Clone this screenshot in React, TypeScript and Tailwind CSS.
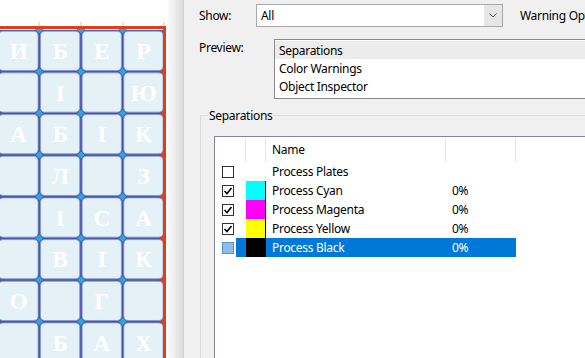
import React from 'react';

const STEP = 41.67;
const COL_X = [-2.4, 39.27, 80.94, 122.61, 164.28];
const ROW_Y = Array.from({ length: 9 }, (_, i) => 30 + i * STEP);

const LETTERS = [
    ['И', 'Б', 'Е', 'Р'],
    ['', 'І', '', 'Ю'],
    ['А', 'Б', 'І', 'К'],
    ['', 'Л', '', 'З'],
    ['', 'І', 'С', 'А'],
    ['', 'В', 'І', 'К'],
    ['О', '', 'Г', ''],
    ['', 'Б', 'А', 'Х'],
];

const Diamond = ({ x, y, fill, stroke }: { x: number; y: number; fill: string; stroke: string }) => (
    <polygon
        points={`${x},${y - 4} ${x + 4},${y} ${x},${y + 4} ${x - 4},${y}`}
        fill={fill}
        stroke={stroke}
        strokeWidth={0.8}
    />
);

const Canvas = () => (
    <svg width={166} height={358} className="block">
        <rect x={0} y={30} width={166} height={328} fill="#4656a8" />
        {LETTERS.map((row, r) =>
            row.map((ch, c) => (
                <g key={`${r}-${c}`}>
                    <rect
                        x={COL_X[c] + 1.2}
                        y={ROW_Y[r] + 1.2}
                        width={STEP - 2.4}
                        height={STEP - 2.4}
                        rx={4}
                        fill="#e4f1f7"
                        stroke="#8a94cc"
                        strokeWidth={0.8}
                    />
                    {ch && (
                        <text
                            x={COL_X[c] + STEP / 2}
                            y={ROW_Y[r] + STEP / 2 + 8}
                            textAnchor="middle"
                            fill="#ffffff"
                            fontFamily="'Liberation Serif', serif"
                            fontWeight={700}
                            fontSize={23}
                        >
                            {ch}
                        </text>
                    )}
                </g>
            ))
        )}
        {ROW_Y.map((y) =>
            COL_X.slice(1, 4).map((x) => (
                <Diamond key={`${x}-${y}`} x={x} y={y} fill="#2ea5e2" stroke="#3b62b0" />
            ))
        )}
        <rect x={0} y={26} width={166} height={3} fill="#e53c18" />
        <rect x={163} y={26} width={3} height={332} fill="#e53c18" />
        {ROW_Y.slice(1).map((y) => (
            <Diamond key={`r-${y}`} x={164.5} y={y} fill="#e53c18" stroke="#e53c18" />
        ))}
        {[39, 81, 123, 164].map((x) => (
            <line key={x} x1={x} y1={22} x2={x} y2={26} stroke="#c8c8c8" strokeWidth={1} />
        ))}
    </svg>
);

const Check = ({ checked, selected }: { checked?: boolean; selected?: boolean }) => (
    <div
        className={
            selected
                ? 'w-[12px] h-[12px] border border-[#5b8fca] bg-[#8dbcea]'
                : 'w-[12px] h-[12px] border border-[#333333] bg-white flex items-center justify-center'
        }
    >
        {checked && (
            <svg width={10} height={10} viewBox="0 0 10 10">
                <path d="M1.5 5 L4 7.5 L8.5 2" fill="none" stroke="#000" strokeWidth={1.6} />
            </svg>
        )}
    </div>
);

const rows = [
    { name: 'Process Plates', swatch: '', pct: '', checked: false },
    { name: 'Process Cyan', swatch: 'bg-[#00ffff]', pct: '0%', checked: true },
    { name: 'Process Magenta', swatch: 'bg-[#ff00ff]', pct: '0%', checked: true },
    { name: 'Process Yellow', swatch: 'bg-[#ffff00]', pct: '0%', checked: true },
    { name: 'Process Black', swatch: 'bg-black', pct: '0%', checked: false, selected: true },
];

export default function App() {
    return (
        <div
            className="w-[585px] h-[358px] flex overflow-hidden text-[12px] tracking-[-0.3px] text-black"
            style={{ fontFamily: "'Noto Sans', sans-serif" }}
        >
            <div className="w-[166px] shrink-0 bg-white">
                <Canvas />
            </div>
            <div className="w-[18px] shrink-0 bg-gradient-to-r from-white to-[#dcdcdc] border-r border-[#d2d2d2]" />
            <div className="flex-1 bg-[#f0f0f0] pl-[15px] flex flex-col min-w-0">
                <div className="mt-[4px] h-[23px] flex items-center whitespace-nowrap">
                    <div className="w-[57px] shrink-0 pt-px">Show:</div>
                    <div className="w-[247px] h-[23px] shrink-0 border border-[#a8a8a8] bg-white flex">
                        <div className="flex-1 pl-[4px] flex items-center">All</div>
                        <div className="w-[18px] bg-[#e6e6e6] flex items-center justify-center">
                            <svg width={8} height={5} viewBox="0 0 8 5">
                                <path d="M0.5 0.5 L4 4 L7.5 0.5" fill="none" stroke="#555" strokeWidth={1} />
                            </svg>
                        </div>
                    </div>
                    <div className="ml-[17px] pt-px">Warning Options</div>
                </div>

                <div className="mt-[12px] flex">
                    <div className="w-[75px] shrink-0">Preview:</div>
                    <div className="w-[400px] h-[60px] shrink-0 border border-[#8a8a8a] bg-white pt-px">
                        <div className="h-[18px] pl-[4px] pt-[2px] flex items-center bg-[#ececec]">Separations</div>
                        <div className="h-[18px] pl-[4px] pt-[2px] flex items-center">Color Warnings</div>
                        <div className="h-[18px] pl-[4px] pt-[2px] flex items-center">Object Inspector</div>
                    </div>
                </div>

                <div className="mt-[16px] ml-px flex-1 relative border-t border-l border-[#dcdcdc] flex flex-col">
                    <div className="absolute left-[7px] -top-[8px] bg-[#f0f0f0] px-px leading-[16px]">Separations</div>
                    <div className="ml-[13px] mt-[20px] flex-1 border-t border-l border-[#828790] bg-white whitespace-nowrap">
                        <div className="h-[25px] flex pt-px">
                            <div className="w-[31px] border-r border-[#e5e5e5]" />
                            <div className="w-[20px] border-r border-[#e5e5e5]" />
                            <div className="w-[180px] border-r border-[#e5e5e5] pl-[6px] flex items-center">Name</div>
                            <div className="w-[70px] border-r border-[#e5e5e5]" />
                        </div>
                        {rows.map((r) => (
                            <div key={r.name} className="h-[19px] flex">
                                <div className="w-[21px] shrink-0 pl-[7px] flex items-center">
                                    <Check checked={r.checked} selected={r.selected} />
                                </div>
                                <div
                                    className={
                                        r.selected
                                            ? 'w-[280px] flex bg-[#0078d7] text-white'
                                            : 'w-[280px] flex'
                                    }
                                >
                                    <div className="w-[10px]" />
                                    <div className="w-[20px] flex">
                                        {r.swatch && (
                                            <div className={`w-[20px] h-full border-r border-black ${r.swatch}`} />
                                        )}
                                    </div>
                                    <div className="w-[180px] pl-[6px] flex items-center">{r.name}</div>
                                    <div className="w-[70px] pl-[6px] flex items-center">{r.pct}</div>
                                </div>
                            </div>
                        ))}
                    </div>
                </div>
            </div>
        </div>
    );
}
